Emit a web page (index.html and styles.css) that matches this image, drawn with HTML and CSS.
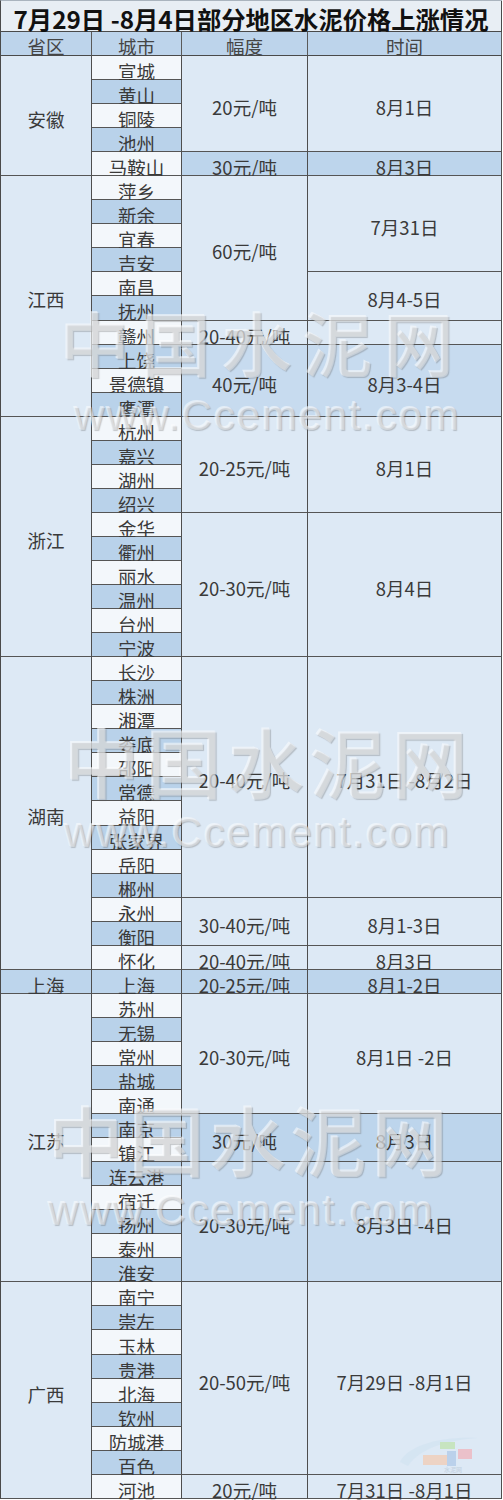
FILE: index.html
```html
<!DOCTYPE html>
<html lang="zh-CN">
<head>
<meta charset="utf-8">
<title>7月29日-8月4日部分地区水泥价格上涨情况</title>
<link rel="stylesheet" href="styles.css">
</head>
<body>
<div class="sheet">
  <div class="grid">
    <div class="title">7月29日 -8月4日部分地区水泥价格上涨情况</div>
    <div class="hd k1">省区</div><div class="hd k2">城市</div><div class="hd k3">幅度</div><div class="hd k4">时间</div>

    <!-- 安徽 -->
    <div class="cell k1 r5 bg">安徽</div>
    <div class="cell k2 lt">宣城</div>
    <div class="cell k3 r4 bg">20元/吨</div>
    <div class="cell k4 r4 bg">8月1日</div>
    <div class="cell k2 dk">黄山</div>
    <div class="cell k2 lt">铜陵</div>
    <div class="cell k2 dk">池州</div>
    <div class="cell k2 lt">马鞍山</div>
    <div class="cell k3 hi">30元/吨</div>
    <div class="cell k4 hi">8月3日</div>

    <!-- 江西 -->
    <div class="cell k1 r10 bg">江西</div>
    <div class="cell k2 lt">萍乡</div>
    <div class="cell k3 r6 bg">60元/吨</div>
    <div class="cell k4 r4 bg">7月31日</div>
    <div class="cell k2 dk">新余</div>
    <div class="cell k2 lt">宜春</div>
    <div class="cell k2 dk">吉安</div>
    <div class="cell k2 lt">南昌</div>
    <div class="cell k4 r2 bg">8月4-5日</div>
    <div class="cell k2 dk">抚州</div>
    <div class="cell k2 lt">赣州</div>
    <div class="cell k3 bg">20-40元/吨</div>
    <div class="cell k4 bg"></div>
    <div class="cell k2 dk">上饶</div>
    <div class="cell k3 r3 md">40元/吨</div>
    <div class="cell k4 r3 md">8月3-4日</div>
    <div class="cell k2 lt">景德镇</div>
    <div class="cell k2 dk">鹰潭</div>

    <!-- 浙江 -->
    <div class="cell k1 r10 bg">浙江</div>
    <div class="cell k2 lt">杭州</div>
    <div class="cell k3 r4 bg">20-25元/吨</div>
    <div class="cell k4 r4 bg">8月1日</div>
    <div class="cell k2 dk">嘉兴</div>
    <div class="cell k2 lt">湖州</div>
    <div class="cell k2 dk">绍兴</div>
    <div class="cell k2 lt">金华</div>
    <div class="cell k3 r6 bg">20-30元/吨</div>
    <div class="cell k4 r6 bg">8月4日</div>
    <div class="cell k2 dk">衢州</div>
    <div class="cell k2 lt">丽水</div>
    <div class="cell k2 dk">温州</div>
    <div class="cell k2 lt">台州</div>
    <div class="cell k2 dk">宁波</div>

    <!-- 湖南 -->
    <div class="cell k1 r13 bg">湖南</div>
    <div class="cell k2 lt">长沙</div>
    <div class="cell k3 r10 bg">20-40元/吨</div>
    <div class="cell k4 r10 bg">7月31日 -8月2日</div>
    <div class="cell k2 dk">株洲</div>
    <div class="cell k2 lt">湘潭</div>
    <div class="cell k2 dk">娄底</div>
    <div class="cell k2 lt">邵阳</div>
    <div class="cell k2 dk">常德</div>
    <div class="cell k2 lt">益阳</div>
    <div class="cell k2 dk">张家界</div>
    <div class="cell k2 lt">岳阳</div>
    <div class="cell k2 dk">郴州</div>
    <div class="cell k2 lt">永州</div>
    <div class="cell k3 r2 bg">30-40元/吨</div>
    <div class="cell k4 r2 bg">8月1-3日</div>
    <div class="cell k2 dk">衡阳</div>
    <div class="cell k2 lt">怀化</div>
    <div class="cell k3 bg">20-40元/吨</div>
    <div class="cell k4 bg">8月3日</div>

    <!-- 上海 -->
    <div class="cell k1 hi">上海</div>
    <div class="cell k2 hi">上海</div>
    <div class="cell k3 hi">20-25元/吨</div>
    <div class="cell k4 hi">8月1-2日</div>

    <!-- 江苏 -->
    <div class="cell k1 r12 bg">江苏</div>
    <div class="cell k2 lt">苏州</div>
    <div class="cell k3 r5 bg">20-30元/吨</div>
    <div class="cell k4 r5 bg">8月1日 -2日</div>
    <div class="cell k2 dk">无锡</div>
    <div class="cell k2 lt">常州</div>
    <div class="cell k2 dk">盐城</div>
    <div class="cell k2 lt">南通</div>
    <div class="cell k2 dk">南京</div>
    <div class="cell k3 r2 hi">30元/吨</div>
    <div class="cell k4 r2 hi">8月3日</div>
    <div class="cell k2 lt">镇江</div>
    <div class="cell k2 dk">连云港</div>
    <div class="cell k3 r5 md">20-30元/吨</div>
    <div class="cell k4 r5 md">8月3日 -4日</div>
    <div class="cell k2 lt">宿迁</div>
    <div class="cell k2 dk">扬州</div>
    <div class="cell k2 lt">泰州</div>
    <div class="cell k2 dk">淮安</div>

    <!-- 广西 -->
    <div class="cell k1 r9 bg">广西</div>
    <div class="cell k2 lt">南宁</div>
    <div class="cell k3 r8 bg">20-50元/吨</div>
    <div class="cell k4 r8 bg">7月29日 -8月1日</div>
    <div class="cell k2 dk">崇左</div>
    <div class="cell k2 lt">玉林</div>
    <div class="cell k2 dk">贵港</div>
    <div class="cell k2 lt">北海</div>
    <div class="cell k2 dk">钦州</div>
    <div class="cell k2 lt">防城港</div>
    <div class="cell k2 dk">百色</div>
    <div class="cell k2 lt">河池</div>
    <div class="cell k3 bg">20元/吨</div>
    <div class="cell k4 bg">7月31日 -8月1日</div>
  </div>

  <div class="wm wm1"><div class="wm-cn">中国水泥网</div><div class="wm-en">www.Ccement.com</div></div>
  <div class="wm wm2"><div class="wm-cn">中国水泥网</div><div class="wm-en">www.Ccement.com</div></div>
  <div class="wm wm3"><div class="wm-cn">中国水泥网</div><div class="wm-en">www.Ccement.com</div></div>

  <div class="logo">
    <svg width="82" height="48" viewBox="0 0 82 48">
      <path d="M2 30 C 10 14, 40 4, 80 6 C 50 8, 22 16, 10 34 Z" fill="#d3e4f2"/>
      <rect x="42" y="10" width="15" height="7" fill="#bfe2ab"/>
      <rect x="60" y="17" width="14" height="10" fill="#f2b1b9"/>
      <rect x="25" y="23" width="24" height="10" fill="#f5cbb0"/>
      <rect x="49" y="19" width="9" height="15" fill="#aec8e8"/>
    </svg>
    <span class="logo-txt">水泥网</span>
  </div>
</div>
</body>
</html>
```

FILE: styles.css
```css
* { box-sizing: border-box; }

body {
  margin: 0;
  background: #ffffff;
  font-family: "Noto Sans CJK SC", "Noto Sans", sans-serif;
}

.sheet {
  position: relative;
  width: 503px;
  height: 1500px;
}

.grid {
  display: grid;
  grid-template-columns: 91px 90px 126px 194px;
  grid-template-rows: 31px 24px;
  grid-auto-rows: 24.05px;
  width: 502px;
  border-left: 1px solid #4a4a4a;
  border-top: 1px solid #aab4be;
}

.title {
  grid-column: 1 / -1;
  display: flex;
  align-items: center;
  justify-content: center;
  padding-top: 5px;
  background: #e8eef4;
  border-right: 1px solid #4a4a4a;
  border-bottom: 1px solid #4a4a4a;
  font-size: 24.3px;
  font-weight: 700;
  line-height: 24px;
  color: #111111;
  white-space: nowrap;
}

.hd {
  display: flex;
  align-items: center;
  justify-content: center;
  padding-top: 4px;
  background: #bdd4eb;
  border-right: 1px solid #5a5a5a;
  border-bottom: 1px solid #4a4a4a;
  font-size: 18.5px;
  line-height: 18px;
  color: #454545;
}

.cell {
  display: flex;
  align-items: center;
  justify-content: center;
  padding-top: 7px;
  border-right: 1px solid #4e4e4e;
  border-bottom: 1px solid #555555;
  font-size: 18.5px;
  line-height: 16px;
  color: #3a3a3a;
  white-space: nowrap;
}

.k1 { grid-column: 1; }
.k2 { grid-column: 2; }
.k3 { grid-column: 3; }
.k4 { grid-column: 4; }

.r2 { grid-row: span 2; }
.r3 { grid-row: span 3; }
.r4 { grid-row: span 4; }
.r5 { grid-row: span 5; }
.r6 { grid-row: span 6; }
.r8 { grid-row: span 8; }
.r9 { grid-row: span 9; }
.r10 { grid-row: span 10; }
.r12 { grid-row: span 12; }
.r13 { grid-row: span 13; }

.bg { background: #dde9f5; }
.lt { background: #f3f7fb; }
.dk { background: #b9d2ea; }
.hi { background: #bdd5ec; }
.md { background: #c7dbef; }

/* watermark overlay */
.wm {
  position: absolute;
  pointer-events: none;
  display: flex;
  flex-direction: column;
}

.wm-cn,
.wm-en {
  color: rgba(244, 246, 249, 0.42);
  text-shadow: 1px 1px 1px rgba(95, 95, 95, 0.32), -1px -1px 0 rgba(255, 255, 255, 0.5);
  white-space: nowrap;
  line-height: 1;
}

.wm-cn {
  font-family: "Noto Sans CJK SC", sans-serif;
  font-weight: 500;
  font-size: 70px;
  letter-spacing: 11px;
}

.wm-en {
  font-family: "Liberation Sans", Arial, sans-serif;
  font-size: 42px;
  letter-spacing: 1.8px;
  margin-top: 16px;
}

.wm1 { left: 60px; top: 307px; }
.wm1 .wm-en { margin-left: 14px; margin-top: 18px; }
.wm2 { left: 64px; top: 722px; }
.wm2 .wm-cn { font-size: 76px; letter-spacing: 6px; }
.wm2 .wm-en { margin-left: 0; margin-top: 14px; }
.wm3 { left: 48px; top: 1100px; }
.wm3 .wm-cn { font-size: 76px; letter-spacing: 5px; }
.wm3 .wm-en { margin-left: 0; margin-top: 14px; }

.logo {
  position: absolute;
  left: 398px;
  top: 1432px;
  width: 82px;
  height: 48px;
  opacity: 0.7;
}

.logo svg { display: block; }

.logo-txt {
  position: absolute;
  left: 46px;
  top: 35px;
  font-size: 6px;
  line-height: 1;
  color: #b7c7d6;
}
```
